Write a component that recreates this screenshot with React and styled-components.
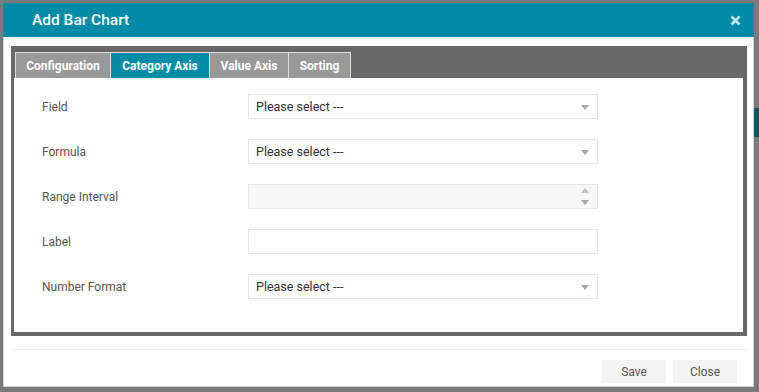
import React from "react";
import styled, { createGlobalStyle } from "styled-components";

const Global = createGlobalStyle`
  html, body { margin: 0; padding: 0; }
  body { font-family: Roboto, "Liberation Sans", Arial, sans-serif; background: #7b7b7b; }
  * { box-sizing: border-box; }
`;

const Backdrop = styled.div`
  width: 759px;
  height: 392px;
  background: #7b7b7b;
  padding: 3px 5px 5px 3px;
  position: relative;
  overflow: hidden;
`;

const PageHint = styled.div`
  position: absolute;
  right: 0;
  top: 108px;
  width: 6px;
  height: 29px;
  background: #0d5963;
`;

const Modal = styled.div`
  position: relative;
  z-index: 1;
  width: 751px;
  height: 384px;
  background: #fff;
  border: 1px solid #d4d4d4;
  display: flex;
  flex-direction: column;
`;

const Header = styled.div`
  height: 34px;
  margin: -1px -1px 0;
  background: #008ba6;
  display: flex;
  align-items: center;
  justify-content: space-between;
  padding: 0 13px 0 29px;
  flex-shrink: 0;
`;

const Title = styled.div`
  color: #fff;
  font-size: 15.5px;
  font-weight: 500;
`;

const CloseX = styled.svg`
  width: 11px;
  height: 11px;
  display: block;
`;

const Body = styled.div`
  flex: 1;
  display: flex;
  flex-direction: column;
  padding: 9px 6px 0 6px;
`;

const Panel = styled.div`
  background: #686868;
  margin-left: 1px;
  padding: 6px 4px 4px 3px;
  display: flex;
  flex-direction: column;
  height: 290px;
`;

const TabList = styled.div`
  display: flex;
  padding-left: 1px;
  height: 26px;
`;

const Tab = styled.div`
  height: 26px;
  width: ${(p) => p.$w}px;
  display: flex;
  align-items: center;
  justify-content: center;
  font-size: 12px;
  font-weight: 700;
  color: #fff;
  background: ${(p) => (p.$active ? "#008ba6" : "#999999")};
  border: 1px solid #dcdcdc;
  border-bottom: none;
  margin-right: -1px;
`;

const Content = styled.div`
  flex: 1;
  background: #fff;
  padding: 16px 0 0 28px;
  display: flex;
  flex-direction: column;
  gap: 20px;
`;

const Row = styled.div`
  display: grid;
  grid-template-columns: 206px 350px;
  align-items: center;
  height: 25px;
`;

const Label = styled.div`
  font-size: 12px;
  color: #555;
`;

const Input = styled.div`
  height: 25px;
  border: 1px solid #e6e6e6;
  background: ${(p) => (p.$disabled ? "#f7f7f7" : "#fff")};
  display: flex;
  align-items: center;
  justify-content: space-between;
  padding: 0 8px 0 7px;
  font-size: 12.5px;
  color: #333;
`;

const Arrows = styled.div`
  display: flex;
  flex-direction: column;
  gap: 7px;
`;

const Tri = styled.svg`
  width: 8px;
  height: 5px;
  display: block;
  margin-top: ${(p) => (p.$single ? "2px" : "0")};
`;

const Down = ({ single }) => (
  <Tri viewBox="0 0 8 5" $single={single}>
    <path d="M0 0 H8 L4 5 Z" fill="#a8a8a8" />
  </Tri>
);
const Up = () => (
  <Tri viewBox="0 0 8 5">
    <path d="M0 5 H8 L4 0 Z" fill="#c4c4c4" />
  </Tri>
);

const Footer = styled.div`
  margin-top: 13px;
  border-top: 1px solid #ececec;
  display: flex;
  justify-content: flex-end;
  gap: 7px;
  padding: 10px 10px 0 0;
  margin-left: 3px;
`;

const Button = styled.button`
  width: 64px;
  height: 23px;
  border: none;
  background: #f4f4f4;
  color: #555;
  font-family: Roboto, "Liberation Sans", Arial, sans-serif;
  font-size: 12px;
  padding: 0;
  cursor: pointer;
`;

const tabs = [
  { label: "Configuration", w: 96 },
  { label: "Category Axis", w: 100, active: true },
  { label: "Value Axis", w: 80 },
  { label: "Sorting", w: 63 },
];

const rows = [
  { label: "Field", type: "select" },
  { label: "Formula", type: "select" },
  { label: "Range Interval", type: "number" },
  { label: "Label", type: "text" },
  { label: "Number Format", type: "select" },
];

export default function App() {
  return (
    <>
      <Global />
      <Backdrop>
        <PageHint />
        <Modal>
          <Header>
            <Title>Add Bar Chart</Title>
            <CloseX viewBox="0 0 11 11">
              <path
                d="M1.5 1.5 L9.5 9.5 M9.5 1.5 L1.5 9.5"
                stroke="#bfe3ea"
                strokeWidth="2.6"
                strokeLinecap="butt"
              />
            </CloseX>
          </Header>
          <Body>
            <Panel>
              <TabList>
                {tabs.map((t) => (
                  <Tab key={t.label} $w={t.w} $active={t.active}>
                    {t.label}
                  </Tab>
                ))}
              </TabList>
              <Content>
                {rows.map((r) => (
                  <Row key={r.label}>
                    <Label>{r.label}</Label>
                    <Input $disabled={r.type === "number"}>
                      <span>{r.type === "select" ? "Please select ---" : ""}</span>
                      {r.type === "select" && <Down single />}
                      {r.type === "number" && (
                        <Arrows>
                          <Up />
                          <Down />
                        </Arrows>
                      )}
                    </Input>
                  </Row>
                ))}
              </Content>
            </Panel>
            <Footer>
              <Button>Save</Button>
              <Button>Close</Button>
            </Footer>
          </Body>
        </Modal>
      </Backdrop>
    </>
  );
}
